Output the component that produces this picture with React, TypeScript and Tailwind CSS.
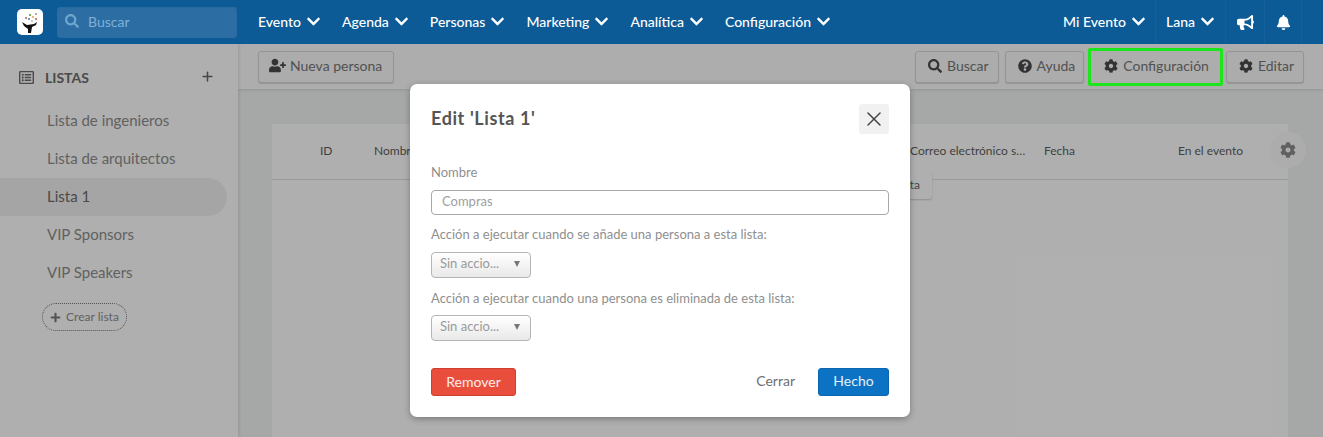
import React from "react";
import { FaBell, FaBullhorn, FaChevronDown, FaCog, FaPlus, FaQuestionCircle, FaRegListAlt, FaSearch, FaUserPlus } from "react-icons/fa";
import { X, Plus } from "lucide-react";

const menus = ["Evento", "Agenda", "Personas", "Marketing", "Analítica", "Configuración"];
const lists = ["Lista de ingenieros", "Lista de arquitectos", "Lista 1", "VIP Sponsors", "VIP Speakers"];

const Logo = () => (
  <div className="w-[26px] h-[26px] bg-white rounded-[5px] flex items-center justify-center shrink-0">
    <svg width="24" height="24" viewBox="0 0 24 24">
      <path d="M4 12 L9 15 L16 14 L19 12 L18 15 L14 17 L13 23 L10 23 L10 19 L6 16 Z" fill="#111" />
      <circle cx="8" cy="8" r="1" fill="#c8553d" />
      <circle cx="12" cy="5" r="1" fill="#5a8f3c" />
      <circle cx="15" cy="7" r="1" fill="#d9a441" />
      <circle cx="18" cy="4" r="0.8" fill="#444" />
      <circle cx="11" cy="9" r="1" fill="#3c78b5" />
      <circle cx="18" cy="9" r="1" fill="#c8553d" />
      <circle cx="14" cy="11" r="0.8" fill="#888" />
    </svg>
  </div>
);

const NavMenu = ({ label }: { label: string }) => (
  <div className="flex items-center gap-[5px] pb-[2px] text-[14px] font-medium text-white">
    {label}
    <FaChevronDown className="text-[15px]" />
  </div>
);

const ToolButton = ({ icon, label, padRight = "pr-[9px]" }: { icon: React.ReactNode; label: string; padRight?: string }) => (
  <div className={"h-[32px] pl-[12px] pb-[2px] flex items-center gap-[5px] text-[14px] text-[#757575] bg-[#f7f7f7] border border-[#d4d4d4] rounded-[3px] shadow-[0_1px_1px_rgba(0,0,0,0.15)] " + padRight}>
    {icon}
    {label}
  </div>
);

const ActionSelect = () => (
  <div className="w-[100px] h-[26px] pl-[8px] pr-[10px] pb-[2px] flex items-center justify-between text-[13px] text-[#9a9a9a] border border-[#b5b5b5] rounded-[4px] bg-gradient-to-b from-white to-[#e9e9e9]">
    Sin accio...
    <span className="w-0 h-0 border-x-[3.5px] border-x-transparent border-t-[6px] border-t-[#777]" />
  </div>
);

const App: React.FC = () => {
  return (
    <div className="relative w-[1323px] h-[437px] overflow-hidden font-['Lato','Open_Sans',sans-serif] bg-[#eef0f0]">
      <header className="relative z-30 h-[44px] bg-[#0c5a96] flex items-center pl-[17px]">
        <Logo />
        <div className="ml-[14px] w-[180px] h-[31px] rounded-[3px] bg-[#2c6ea3] border border-[#2a6a9e] flex items-center pl-[7px] pb-[2px] gap-[9px] text-[14px] text-[#7fb0d6]">
          <FaSearch className="text-[14px] text-[#6fa5cf]" />
          Buscar
        </div>
        <nav className="ml-[21px] flex items-center gap-[21px]">
          {menus.map((m) => (
            <NavMenu key={m} label={m} />
          ))}
        </nav>
        <div className="ml-auto flex items-center h-full pr-[21px] text-white">
          <div className="pr-[9px] border-r border-[#175f99] h-full flex items-center">
            <NavMenu label="Mi Evento" />
          </div>
          <div className="pl-[10px] pr-[10px] border-r border-[#175f99] h-full flex items-center">
            <NavMenu label="Lana" />
          </div>
          <div className="w-[39px] border-r border-[#175f99] h-full flex items-center justify-center">
            <FaBullhorn className="text-[17px]" />
          </div>
          <div className="w-[37px] border-r border-[#175f99] h-full flex items-center justify-center">
            <FaBell className="text-[15px]" />
          </div>
        </div>
      </header>

      <div className="flex h-[393px]">
        <aside className="w-[238px] shrink-0 bg-[#fbfbfb] shadow-[1px_0_3px_rgba(0,0,0,0.12)] relative z-[1]">
          <div className="flex items-start justify-between h-[58px] pt-[23px] pl-[19px] pr-[23px]">
            <div className="flex items-center gap-[11px] h-[20px] text-[14px] font-bold text-[#6a6a6a]">
              <FaRegListAlt className="text-[15px]" />
              LISTAS
            </div>
            <Plus size={15} strokeWidth={2.4} className="text-[#666] mt-[2px]" />
          </div>
          <ul className="text-[15px] text-[#8c8c8c]">
            {lists.map((l) => (
              <li
                key={l}
                className={
                  l === "Lista 1"
                    ? "h-[38px] w-[227px] pl-[47px] pb-[2px] flex items-center bg-[#ededed] rounded-r-[19px] text-[#6a6a6a]"
                    : "h-[38px] pl-[47px] pb-[2px] flex items-center"
                }
              >
                {l}
              </li>
            ))}
          </ul>
          <div className="mt-[11px] ml-[42px] w-[85px] h-[28px] border border-dotted border-[#777] rounded-[14px] flex items-center justify-center gap-[5px] text-[12px] text-[#8c8c8c]">
            <FaPlus className="text-[11px] text-[#777]" />
            Crear lista
          </div>
        </aside>

        <main className="flex-1 min-w-0">
          <div className="h-[45px] bg-[#f8f8f8] shadow-[0_1px_3px_rgba(0,0,0,0.12)] flex items-center justify-between pl-[20px] pr-[19px]">
            <ToolButton icon={<FaUserPlus className="text-[17px] text-[#4a4a4a] -ml-[2px] -mr-[1px]" />} label="Nueva persona" padRight="pr-[11px]" />
            <div className="flex items-center gap-[6px]">
              <ToolButton icon={<FaSearch className="text-[14px] text-[#4a4a4a]" />} label="Buscar" />
              <ToolButton icon={<FaQuestionCircle className="text-[14px] text-[#4a4a4a]" />} label="Ayuda" padRight="pr-[8px]" />
              <div className="relative z-30 ml-[1px] h-[32px] pl-[13px] pr-[11px] pb-[2px] flex items-center gap-[5px] text-[14px] text-[#525252] bg-[#adadad]">
                <FaCog className="text-[14px] text-[#333]" />
                Configuración
                <div className="absolute -inset-[3px] border-[3px] border-[#1be61b] rounded-[2px]" />
              </div>
              <ToolButton icon={<FaCog className="text-[14px] text-[#4a4a4a]" />} label="Editar" />
            </div>
          </div>

          <div className="relative ml-[34px] mt-[35px] w-[1016px] h-[320px] bg-[#fbfbfb]">
            <div className="h-[56px] pb-[2px] flex items-center pl-[48px] text-[12px] text-[#5c5c5c] border-b border-[#dddddd]">
              <span className="w-[54px]">ID</span>
              <span className="w-[536px]">Nombre</span>
              <span className="w-[134px] pr-[6px]">
                <span className="block w-[118px] truncate">Correo electrónico secundario</span>
              </span>
              <span className="w-[134px]">Fecha</span>
              <span>En el evento</span>
            </div>
            <div className="absolute left-[560px] top-[47px] w-[100px] h-[28px] bg-[#fbfbfb] rounded-[3px] shadow-[0_1px_2px_rgba(0,0,0,0.2)] flex items-center justify-end pr-[12px] text-[12px] text-[#666]">
              ta
            </div>
            <div className="absolute -right-[18px] top-[8px] w-[36px] h-[36px] rounded-full bg-[#f7f7f7] flex items-center justify-center">
              <FaCog className="text-[16px] text-[#8a8a8a]" />
            </div>
          </div>
        </main>
      </div>

      <div className="absolute inset-x-0 top-[44px] bottom-0 z-20 bg-black/30" />

      <div className="absolute z-40 left-[410px] top-[84px] w-[500px] h-[333px] bg-white rounded-[7px] shadow-[0_2px_6px_rgba(0,0,0,0.3)] px-[21px]">
        <div className="h-[69px] flex items-center justify-between">
          <h2 className="text-[18px] font-bold text-[#555] tracking-[0.6px]">Edit 'Lista 1'</h2>
          <div className="w-[30px] h-[30px] bg-[#f1f1f1] rounded-[3px] flex items-center justify-center">
            <X size={24} strokeWidth={1.5} className="text-[#444]" />
          </div>
        </div>
        <label className="block mt-[10px] text-[13px] leading-[18px] text-[#8f8f8f]">Nombre</label>
        <div className="mt-[9px] h-[25px] border border-[#a8a8a8] rounded-[4px] pl-[10px] pb-[2px] flex items-center text-[13px] text-[#a0a0a0]">
          Compras
        </div>
        <p className="mt-[10px] text-[13px] leading-[18px] text-[#8f8f8f]">Acción a ejecutar cuando se añade una persona a esta lista:</p>
        <div className="mt-[9px]">
          <ActionSelect />
        </div>
        <p className="mt-[11px] text-[13px] leading-[18px] text-[#8f8f8f]">Acción a ejecutar cuando una persona es eliminada de esta lista:</p>
        <div className="mt-[8px]">
          <ActionSelect />
        </div>
        <div className="mt-[27px] flex items-center">
          <button className="w-[85px] h-[28px] pb-[2px] bg-[#e94e3d] border border-[#cf3f30] rounded-[3px] text-[14px] text-white/90">Remover</button>
          <span className="ml-auto pb-[4px] text-[14px] text-[#6f6f6f]">Cerrar</span>
          <button className="ml-[23px] w-[71px] h-[28px] pb-[3px] bg-[#0b72c4] border border-[#0a66b0] rounded-[3px] text-[14px] text-white/90">Hecho</button>
        </div>
      </div>
    </div>
  );
};

export default App;
